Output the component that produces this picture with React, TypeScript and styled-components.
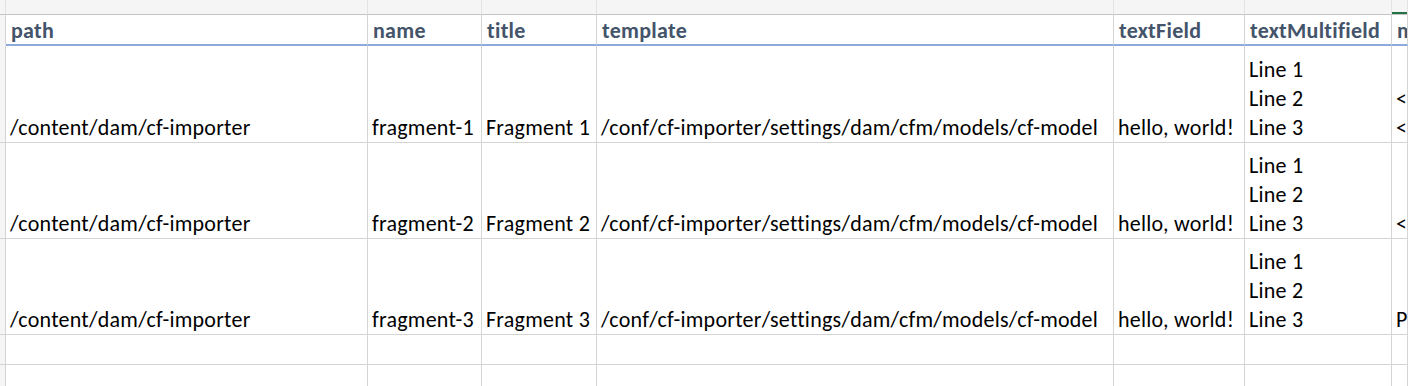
import { Fragment } from "react";
import { createGlobalStyle, styled } from "styled-components";

const Global = createGlobalStyle`
  html, body { margin: 0; padding: 0; background: #fff; overflow: hidden; }
  body { font-family: Carlito, Lato, "Liberation Sans", sans-serif; }
`;

const GRID = "#d4d4d4";

const Sheet = styled.div`
  display: grid;
  grid-template-columns: 6px 362px 114px 115px 517px 131px 147px 1fr;
  grid-template-rows: 15px 31px 97px 96px 96px 30px 30px;
  width: 1408px;
  height: 386px;
  overflow: hidden;
`;

const Strip = styled.div<{ $active?: boolean }>`
  box-sizing: border-box;
  background: #f5f5f5;
  border-right: 1px solid #e2e2e2;
  border-bottom: 1px solid #c4c4c4;
  position: relative;
  ${(p) =>
    p.$active &&
    `
    &::after {
      content: "";
      position: absolute;
      left: 0;
      right: 0;
      bottom: 0;
      height: 2px;
      background: #217346;
    }
  `}
`;

const Gutter = styled.div`
  box-sizing: border-box;
  background: #f5f5f5;
  border-right: 1px solid ${GRID};
  border-bottom: 1px solid ${GRID};
`;

const HeadGutter = styled(Gutter)`
  border-bottom: 2px solid #f5f5f5;
`;

const Head = styled.div`
  box-sizing: border-box;
  border-right: 1px solid ${GRID};
  border-bottom: 2px solid #8eaadb;
  padding: 2px 5px 0;
  display: flex;
  align-items: center;
  font-weight: 700;
  font-size: 22px;
  line-height: 27px;
  letter-spacing: 0.3px;
  color: #44546a;
  white-space: nowrap;
  overflow: hidden;
`;

const Cell = styled.div`
  box-sizing: border-box;
  border-right: 1px solid ${GRID};
  border-bottom: 1px solid ${GRID};
  padding: 0 4px 0;
  display: flex;
  flex-direction: column;
  justify-content: flex-end;
  font-size: 22px;
  line-height: 29px;
  letter-spacing: 0.25px;
  color: #000;
  white-space: nowrap;
  overflow: hidden;
`;

const Line = styled.div`
  height: 29px;
`;

type Row = {
  name: string;
  title: string;
  multi: string[];
  markup: string[];
};

const rows: Row[] = [
  {
    name: "fragment-1",
    title: "Fragment 1",
    multi: ["Line 1", "Line 2", "Line 3"],
    markup: ["", "<p>Paragraph 1</p>", "<p>Paragraph 2</p>"],
  },
  {
    name: "fragment-2",
    title: "Fragment 2",
    multi: ["Line 1", "Line 2", "Line 3"],
    markup: ["<p>Single paragraph</p>"],
  },
  {
    name: "fragment-3",
    title: "Fragment 3",
    multi: ["Line 1", "Line 2", "Line 3"],
    markup: ["Plain text"],
  },
];

const headers = ["path", "name", "title", "template", "textField", "textMultifield", "markdown"];

export default function App() {
  return (
    <>
      <Global />
      <Sheet>
        <Strip />
        {headers.map((h, i) => (
          <Strip key={h} $active={i === headers.length - 1} />
        ))}

        <HeadGutter />
        {headers.map((h) => (
          <Head key={h}>{h}</Head>
        ))}

        {rows.map((r) => (
          <Fragment key={r.name}>
            <Gutter />
            <Cell>/content/dam/cf-importer</Cell>
            <Cell>{r.name}</Cell>
            <Cell>{r.title}</Cell>
            <Cell>/conf/cf-importer/settings/dam/cfm/models/cf-model</Cell>
            <Cell>hello, world!</Cell>
            <Cell>
              {r.multi.map((l) => (
                <Line key={l}>{l}</Line>
              ))}
            </Cell>
            <Cell>
              {r.markup.map((l, i) => (
                <Line key={i}>{l}</Line>
              ))}
            </Cell>
          </Fragment>
        ))}

        {[0, 1].map((k) => (
          <Fragment key={k}>
            <Gutter />
            {headers.map((h) => (
              <Cell key={h} />
            ))}
          </Fragment>
        ))}
      </Sheet>
    </>
  );
}
